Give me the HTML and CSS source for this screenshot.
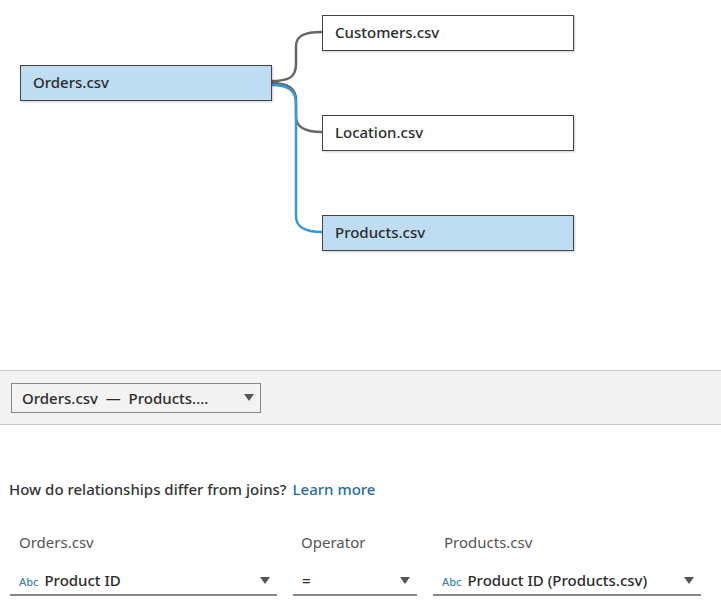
FILE: index.html
```html
<!DOCTYPE html>
<html lang="en">
<head>
    <meta charset="UTF-8">
    <title>Relationships</title>
    <link rel="stylesheet" href="styles.css">
</head>
<body>
    <div class="canvas">
        <svg class="links" width="721" height="370">
            <path d="M271 81 C288 81 296 78 296 64 L296 46 C296 36 304 32 322 32" class="link"/>
            <path d="M271 83 C288 83 296 88 296 100 L296 116 C296 127 304 132 322 132" class="link"/>
            <path d="M271 85 C288 85 296 90 296 104 L296 216 C296 227 304 232 322 232" class="link active"/>
        </svg>
        <div class="node selected" style="left:20px;top:65px">Orders.csv</div>
        <div class="node" style="left:322px;top:15px">Customers.csv</div>
        <div class="node" style="left:322px;top:115px">Location.csv</div>
        <div class="node selected" style="left:322px;top:215px">Products.csv</div>
    </div>

    <div class="band">
        <div class="pair-select">
            <span>Orders.csv&nbsp; —&nbsp; Products....</span>
            <span class="caret"></span>
        </div>
    </div>

    <p class="help">How do relationships differ from joins?<a href="#">Learn more</a></p>

    <div class="fields">
        <div class="field f-left">
            <div class="label">Orders.csv</div>
            <div class="dropdown"><span class="abc">Abc</span><span class="value">Product ID</span><span class="caret"></span></div>
        </div>
        <div class="field f-op">
            <div class="label">Operator</div>
            <div class="dropdown"><span class="value">=</span><span class="caret"></span></div>
        </div>
        <div class="field f-right">
            <div class="label">Products.csv</div>
            <div class="dropdown"><span class="abc">Abc</span><span class="value">Product ID (Products.csv)</span><span class="caret"></span></div>
        </div>
    </div>
</body>
</html>
```

FILE: styles.css
```css
body {
    margin: 0;
    font-family: "Noto Sans", Arial, sans-serif;
    font-weight: 500;
    color: #333;
    background: white;
    width: 721px;
}
.canvas {
    position: relative;
    height: 370px;
}
.links {
    position: absolute;
    left: 0;
    top: 0;
}
.link {
    fill: none;
    stroke: #666;
    stroke-width: 2.5;
}
.link.active {
    stroke: #3a97d6;
}
.node {
    position: absolute;
    box-sizing: border-box;
    width: 252px;
    height: 36px;
    padding-left: 12px;
    border: 1px solid #444;
    background: white;
    font-size: 15px;
    line-height: 33px;
    color: #2b2b2b;
    box-shadow: 1px 1px 2px rgba(0, 0, 0, 0.2);
}
.node.selected {
    background: #bedcf2;
}
.band {
    height: 53px;
    background: #f3f3f3;
    border-top: 1px solid #c8c8c8;
    border-bottom: 1px solid #c8c8c8;
    display: flex;
    align-items: center;
    padding-left: 11px;
}
.pair-select {
    box-sizing: border-box;
    width: 250px;
    height: 30px;
    border: 1px solid #888;
    display: flex;
    align-items: center;
    justify-content: space-between;
    padding: 0 6px 0 10px;
    font-size: 15px;
    color: #2b2b2b;
}
.caret {
    width: 0;
    height: 0;
    border-left: 5px solid transparent;
    border-right: 5px solid transparent;
    border-top: 7px solid #555;
}
.help {
    margin: 54px 0 0 9px;
    font-size: 15px;
    color: #333;
}
.help a {
    margin-left: 6px;
    color: #1f6d9b;
    text-decoration: none;
}
.fields {
    display: flex;
    margin-top: 33px;
    padding-left: 10px;
    gap: 16px;
}
.field {
    display: flex;
    flex-direction: column;
}
.f-left { width: 267px; }
.f-op { width: 124px; }
.f-right { width: 268px; }
.label {
    font-size: 15px;
    font-weight: 400;
    color: #555;
    padding-left: 9px;
    line-height: 20px;
}
.f-op .label { padding-left: 8px; }
.f-right .label { padding-left: 11px; }
.dropdown {
    margin-top: 14px;
    height: 28px;
    border-bottom: 2px solid #888;
    display: flex;
    align-items: center;
    padding: 0 7px 0 9px;
    font-size: 15px;
    color: #2b2b2b;
}
.abc {
    font-size: 11px;
    color: #3e86b0;
    margin: 3px 6px 0 0;
}
.value {
    flex: 1;
}
```
